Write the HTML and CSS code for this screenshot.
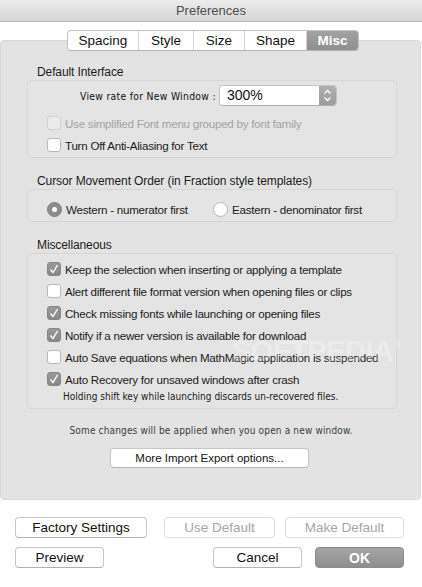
FILE: index.html
```html
<!DOCTYPE html>
<html>
<head>
<meta charset="utf-8">
<title>Preferences</title>
<link rel="stylesheet" href="styles.css">
</head>
<body>
<div class="window">
  <div class="titlebar">Preferences</div>
  <div class="tabs-row">
    <div class="tabs">
      <span class="tab t-spacing">Spacing</span>
      <span class="tab t-style">Style</span>
      <span class="tab t-size">Size</span>
      <span class="tab t-shape">Shape</span>
      <span class="tab t-misc active">Misc</span>
    </div>
  </div>
  <div class="panel">
    <div class="group-label">Default Interface</div>
    <div class="group g1">
      <div class="viewrate">
        <span class="osaka vr-label">View rate for New Window :</span>
        <div class="popup">
          <span class="popup-val">300%</span>
          <span class="popup-arrow">
            <svg width="17" height="19" viewBox="0 0 17 19"><path d="M5.5 7.5 L8.5 4.5 L11.5 7.5 M5.5 11.5 L8.5 14.5 L11.5 11.5" fill="none" stroke="#fff" stroke-width="1.3"/></svg>
          </span>
        </div>
      </div>
      <div class="row disabled"><span class="cb"></span><span>Use simplified Font menu grouped by font family</span></div>
      <div class="row"><span class="cb"></span><span>Turn Off Anti-Aliasing for Text</span></div>
    </div>

    <div class="group-label gl">Cursor Movement Order (in Fraction style templates)</div>
    <div class="group g2">
      <div class="row radios">
        <span class="radio on"></span><span class="r-text">Western - numerator first</span>
        <span class="radio r2"></span><span>Eastern - denominator first</span>
      </div>
    </div>

    <div class="group-label gl">Miscellaneous</div>
    <div class="group g3">
      <div class="row"><span class="cb on"><svg width="14" height="14" viewBox="0 0 14 14"><path d="M3.5 7.5 L6 10.5 L10.5 3" fill="none" stroke="#fff" stroke-width="1.4"/></svg></span><span>Keep the selection when inserting or applying a template</span></div>
      <div class="row"><span class="cb"></span><span>Alert different file format version when opening files or clips</span></div>
      <div class="row"><span class="cb on"><svg width="14" height="14" viewBox="0 0 14 14"><path d="M3.5 7.5 L6 10.5 L10.5 3" fill="none" stroke="#fff" stroke-width="1.4"/></svg></span><span>Check missing fonts while launching or opening files</span></div>
      <div class="row"><span class="cb on"><svg width="14" height="14" viewBox="0 0 14 14"><path d="M3.5 7.5 L6 10.5 L10.5 3" fill="none" stroke="#fff" stroke-width="1.4"/></svg></span><span>Notify if a newer version is available for download</span></div>
      <div class="row"><span class="cb"></span><span>Auto Save equations when MathMagic application is suspended</span></div>
      <div class="row"><span class="cb on"><svg width="14" height="14" viewBox="0 0 14 14"><path d="M3.5 7.5 L6 10.5 L10.5 3" fill="none" stroke="#fff" stroke-width="1.4"/></svg></span><span>Auto Recovery for unsaved windows after crash</span></div>
      <div class="osaka hint">Holding shift key while launching discards un-recovered files.</div>
    </div>

    <div class="osaka note">Some changes will be applied when you open a new window.</div>
    <div class="more-row"><button class="btn more">More Import Export options...</button></div>
  </div>

  <div class="footer">
    <div class="frow">
      <button class="btn b-factory">Factory Settings</button>
      <button class="btn b-use disabled">Use Default</button>
      <button class="btn b-make disabled">Make Default</button>
    </div>
    <div class="frow">
      <button class="btn b-preview">Preview</button>
      <button class="btn b-cancel">Cancel</button>
      <button class="btn b-ok">OK</button>
    </div>
  </div>

  <div class="watermark">SOFTPEDIA<span class="reg">®</span></div>
</div>
</body>
</html>
```

FILE: styles.css
```css
* { box-sizing: border-box; }
html, body { margin: 0; padding: 0; }
body {
  width: 422px;
  height: 587px;
  background: #ffffff;
  font-family: "Liberation Sans", Arial, sans-serif;
  color: #1b1b1b;
  overflow: hidden;
}
.window { position: relative; width: 422px; height: 587px; }

.titlebar {
  height: 22px;
  line-height: 21px;
  text-align: center;
  font-size: 13px;
  color: #4d4d4d;
  background: linear-gradient(#ececec, #d6d6d6);
  border-bottom: 1px solid #b8b8b8;
}

.tabs-row {
  position: relative;
  z-index: 2;
  margin-top: 8px;
  margin-bottom: -11px;
  height: 21px;
  padding-left: 67px;
}
.tabs {
  display: flex;
  height: 21px;
  width: 292px;
  border: 1px solid #c3c3c3;
  border-bottom-color: #b3b3b3;
  border-radius: 4px;
  background: #ffffff;
  overflow: hidden;
}
.tab {
  display: flex;
  align-items: center;
  justify-content: center;
  font-size: 13.5px;
  color: #111;
  border-right: 1px solid #d0d0d0;
  height: 100%;
}
.t-spacing { width: 71px; }
.t-style { width: 55px; }
.t-size { width: 51px; }
.t-shape { width: 62px; }
.t-misc { flex: 1; border-right: none; }
.tab.active {
  background: linear-gradient(#a2a2a2, #8f8f8f);
  color: #fff;
  font-weight: bold;
}

.panel {
  margin-right: 1px;
  background: #e3e3e3;
  border: 1px solid #d8d8d8;
  border-radius: 4px;
  padding: 24px 0 31px 0;
  height: 460px;
}
.group-label {
  font-size: 12px;
  letter-spacing: -0.1px;
  line-height: 15px;
  height: 15px;
  padding-left: 36px;
  color: #1b1b1b;
}
.gl { margin-top: 16px; }
.group {
  margin: 0 23px 0 26px;
  border: 1px solid #d6d6d6;
  border-radius: 4px;
  background: #e4e4e4;
}
.g1 { padding: 4px 0 1px 0; }
.g2 { padding: 8px 0 1px 0; }
.g3 { padding: 4px 0 4px 0; }

.osaka {
  font-family: "DejaVu Sans Condensed", "DejaVu Sans", sans-serif;
  font-size: 10px;
}
.viewrate {
  display: flex;
  align-items: center;
  height: 21px;
  padding-left: 52px;
  margin-bottom: 6px;
}
.vr-label { width: 139px; color: #111; letter-spacing: 0.3px; font-size: 10.3px; }
.popup {
  display: flex;
  width: 118px;
  height: 21px;
  border: 1px solid #c4c4c4;
  border-bottom-color: #afafaf;
  border-radius: 4px;
  background: #fff;
  overflow: hidden;
}
.popup-val {
  flex: 1;
  font-size: 14px;
  line-height: 19px;
  padding-left: 7px;
  color: #111;
}
.popup-arrow {
  width: 17px;
  background: linear-gradient(#b0b0b0, #9b9b9b);
  display: flex;
}

.row {
  display: flex;
  align-items: center;
  height: 22px;
  padding-left: 19px;
  font-size: 11.6px;
  letter-spacing: -0.25px;
  color: #1b1b1b;
  white-space: nowrap;
}
.row.disabled { color: #a3a3a3; }
.cb {
  width: 14px;
  height: 14px;
  flex: none;
  margin-right: 4px;
  border: 1px solid #b9b9b9;
  border-radius: 3px;
  background: #fff;
  display: flex;
}
.disabled .cb { background: #ebebeb; border-color: #cecece; }
.cb.on {
  border-color: #858585;
  background: linear-gradient(#9a9a9a, #888888);
}
.cb.on svg { margin: -1px; }

.radio {
  width: 15px;
  height: 15px;
  flex: none;
  border-radius: 50%;
  border: 1px solid #b5b5b5;
  background: #fff;
  margin-right: 4px;
  display: flex;
  align-items: center;
  justify-content: center;
}
.radio.on { background: #8c8c8c; border-color: #808080; }
.radio.on::after {
  content: "";
  width: 5px;
  height: 5px;
  border-radius: 50%;
  background: #fff;
}
.r-text { width: 147px; }

.hint {
  height: 14px;
  line-height: 14px;
  padding-left: 35px;
  color: #1b1b1b;
}
.note {
  margin-top: 15px;
  height: 14px;
  line-height: 14px;
  text-align: center;
  letter-spacing: 0.15px;
  color: #3c3c3c;
  padding-left: 1px;
}
.more-row {
  margin-top: 10px;
  padding-left: 109px;
}

.btn {
  display: flex;
  align-items: center;
  justify-content: center;
  height: 21px;
  padding: 0;
  background: #fff;
  border: 1px solid #c6c6c6;
  border-bottom-color: #b2b2b2;
  border-radius: 4px;
  font-family: "Liberation Sans", Arial, sans-serif;
  font-size: 13.5px;
  color: #111;
}
.more {
  width: 199px;
  height: 20px;
  font-family: "Liberation Sans Narrow", "Liberation Sans", Arial, sans-serif;
  font-size: 11.5px;
}
.btn.disabled {
  color: #a6a6a6;
  border-color: #dcdcdc;
}

.footer { padding: 17px 18px 0 15px; }
.frow { display: flex; margin-bottom: 9px; }
.b-factory { width: 132px; }
.b-use { width: 111px; margin-left: auto; }
.b-make { width: 119px; margin-left: 10px; }
.b-preview { width: 89px; }
.b-cancel { width: 89px; margin-left: auto; }
.b-ok {
  width: 89px;
  margin-left: 13px;
  background: linear-gradient(#a5a5a5, #8e8e8e);
  border-color: #8a8a8a;
  color: #fff;
  font-weight: bold;
  font-size: 14px;
}

.watermark {
  position: absolute;
  left: 232px;
  top: 335px;
  font-family: "Liberation Sans", Arial, sans-serif;
  font-weight: bold;
  font-size: 29px;
  letter-spacing: -0.5px;
  color: rgba(255, 255, 255, 0.3);
  pointer-events: none;
}
.watermark .reg {
  font-size: 10px;
  vertical-align: top;
  position: relative;
  top: 4px;
}
```
